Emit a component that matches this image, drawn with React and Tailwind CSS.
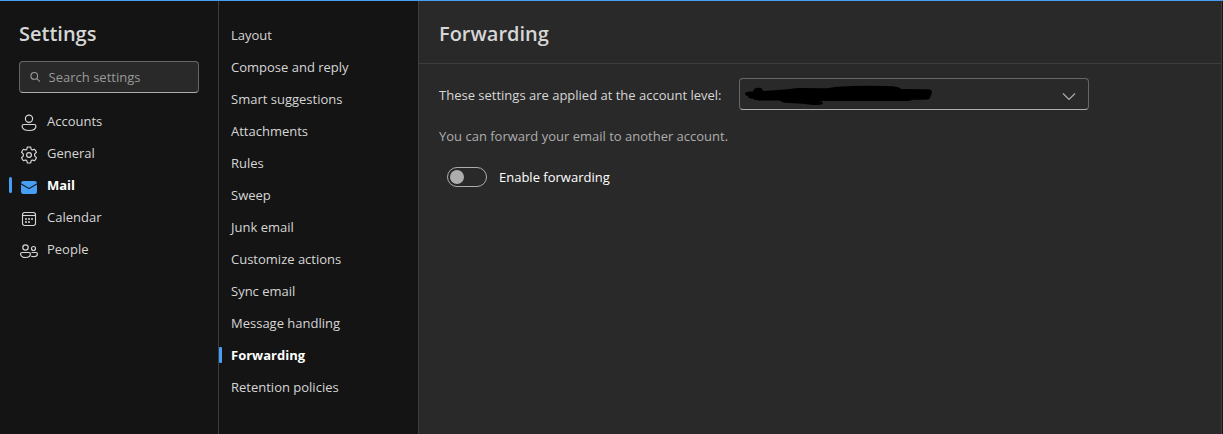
import React, { useState } from 'react';

const AccountIcon = () => (
    <svg width="20" height="20" viewBox="0 0 20 20" fill="none" stroke="currentColor" strokeWidth="1.2" aria-hidden="true">
        <circle cx="10" cy="5.8" r="3.6" />
        <path d="M4.800 11.500h10.400a1.700 1.700 0 0 1 1.700 1.700c0 2.900-3 4.300-6.900 4.300s-6.900-1.400-6.900-4.300a1.700 1.700 0 0 1 1.700-1.700Z" />
    </svg>
);

const GearIcon = () => (
    <svg width="20" height="20" viewBox="0 0 20 20" fill="none" stroke="currentColor" strokeWidth="1.2" strokeLinejoin="round" aria-hidden="true">
        <circle cx="10" cy="10" r="2.4" />
        <path d="M8.300 2.200Q10 1.800 11.700 2.200L12.100 4.100Q12.500 5.100 13.600 4.900L15.600 4.300Q16.900 5.600 17.400 7.400L15.900 8.800Q15.100 10 15.900 11.200L17.400 12.600Q16.900 14.400 15.600 15.700L13.600 15.100Q12.500 14.900 12.100 15.900L11.700 17.800Q10 18.200 8.300 17.800L7.900 15.900Q7.500 14.900 6.400 15.100L4.400 15.700Q3.100 14.400 2.600 12.600L4.100 11.200Q4.900 10 4.100 8.800L2.600 7.400Q3.100 5.600 4.400 4.300L6.400 4.900Q7.500 5.100 7.900 4.100Z" />
    </svg>
);

const MailIcon = () => (
    <svg width="20" height="20" viewBox="0 0 20 20" fill="#479ef5" aria-hidden="true">
        <path d="M18 7.400V14.500A2.500 2.500 0 0 1 15.500 17h-11A2.500 2.500 0 0 1 2 14.500V7.400l7.750 4.530a.5.5 0 0 0 .5 0Z" />
        <path d="M15.500 4A2.500 2.500 0 0 1 18 6.300l-8 4.600L2 6.300A2.500 2.500 0 0 1 4.500 4Z" />
    </svg>
);

const CalendarIcon = () => (
    <svg width="20" height="20" viewBox="0 0 20 20" fill="none" stroke="currentColor" strokeWidth="1.1" aria-hidden="true">
        <rect x="3.5" y="3.5" width="13" height="13" rx="2.2" />
        <path d="M3.500 6.500h13" />
        <g fill="currentColor" stroke="none">
            <circle cx="7" cy="10" r="1" />
            <circle cx="10" cy="10" r="1" />
            <circle cx="13" cy="10" r="1" />
            <circle cx="7" cy="13" r="1" />
            <circle cx="10" cy="13" r="1" />
        </g>
    </svg>
);

const PeopleIcon = () => (
    <svg width="20" height="20" viewBox="0 0 20 20" fill="none" stroke="currentColor" strokeWidth="1.2" aria-hidden="true">
        <circle cx="6.5" cy="6.5" r="2.7" />
        <circle cx="14.5" cy="7.500" r="2" />
        <path d="M3 11.500h7a1.400 1.400 0 0 1 1.400 1.400c0 2-2 3.600-4.900 3.600s-4.900-1.600-4.900-3.600A1.400 1.400 0 0 1 3 11.500Z" />
        <path d="M12.500 11.500H17a1.400 1.400 0 0 1 1.400 1.400c0 1.700-1.700 2.800-3.900 2.800-.9 0-1.700-.1-2.300-.4" />
    </svg>
);

const SearchIcon = () => (
    <svg width="12" height="12" viewBox="0 0 12 12" fill="none" stroke="currentColor" strokeWidth="1.2" aria-hidden="true">
        <circle cx="4.8" cy="4.8" r="3.8" />
        <path d="m7.500 7.500 3.800 3.800" />
    </svg>
);

const sections = [
    { name: 'Accounts', icon: AccountIcon },
    { name: 'General', icon: GearIcon },
    { name: 'Mail', icon: MailIcon },
    { name: 'Calendar', icon: CalendarIcon },
    { name: 'People', icon: PeopleIcon },
];

const mailPages = [
    'Layout',
    'Compose and reply',
    'Smart suggestions',
    'Attachments',
    'Rules',
    'Sweep',
    'Junk email',
    'Customize actions',
    'Sync email',
    'Message handling',
    'Forwarding',
    'Retention policies',
];

function SettingsSidebar() {
    return (
        <aside className="w-[219px] shrink-0 border-r border-[#3d3d3d] pt-[21px]">
            <h1 className="px-[19px] text-xl leading-6 font-semibold text-[#d6d6d6]">Settings</h1>
            <label className="mx-[19px] mt-[15px] flex h-8 items-center gap-2 rounded border border-[#666666] border-b-[#adadad] bg-[#292929] px-2.5 text-[#999999]">
                <SearchIcon />
                <input
                    type="search"
                    aria-label="Search settings"
                    placeholder="Search settings"
                    className="w-full min-w-0 bg-transparent outline-none placeholder:text-[#999999]"
                />
            </label>
            <nav className="mt-3 pl-[9px]" aria-label="Settings">
                {sections.map(({ name, icon: Icon }) => {
                    const active = name === 'Mail';
                    return (
                        <a
                            key={name}
                            href="#"
                            aria-current={active ? 'page' : undefined}
                            className={`flex h-8 items-center ${active ? 'font-bold text-white' : 'text-[#d6d6d6]'}`}
                        >
                            <span className={`h-4 w-[3px] rounded-sm ${active ? 'bg-[#479ef5]' : ''}`} />
                            <span className="mr-2 ml-[7px] pt-1">
                                <Icon />
                            </span>
                            {name}
                        </a>
                    );
                })}
            </nav>
        </aside>
    );
}

function MailNav() {
    return (
        <nav className="w-[200px] shrink-0 border-r border-[#3d3d3d] pt-[18px]" aria-label="Mail">
            {mailPages.map((page) => {
                const active = page === 'Forwarding';
                return (
                    <a
                        key={page}
                        href="#"
                        aria-current={active ? 'page' : undefined}
                        className={`flex h-8 items-center gap-[9px] ${active ? 'font-bold text-white' : 'text-[#d6d6d6]'}`}
                    >
                        <span className={`h-4 w-[3px] rounded-[1px] ${active ? 'bg-[#479ef5]' : ''}`} />
                        {page}
                    </a>
                );
            })}
        </nav>
    );
}

function ForwardingPanel() {
    const [enabled, setEnabled] = useState(false);

    return (
        <main className="min-w-0 flex-1 border-r border-[#3d3d3d] bg-[#292929]">
            <header className="border-b border-[#3d3d3d] px-5 pt-[21px] pb-[17px]">
                <h2 className="text-xl leading-6 font-semibold text-[#d6d6d6]">Forwarding</h2>
            </header>
            <div className="px-5 pt-3.5">
                <div className="flex items-center">
                    <label htmlFor="account" className="w-[300px] pt-0.5 text-[#d6d6d6]">
                        These settings are applied at the account level:
                    </label>
                    <div className="relative w-[350px]">
                        <select
                            id="account"
                            className="block h-8 w-full appearance-none rounded border border-[#666666] border-b-[#adadad] bg-transparent px-3"
                        >
                            <option></option>
                        </select>
                        {/* redacted address and chevron */}
                        <svg className="pointer-events-none absolute inset-0" width="350" height="32" viewBox="0 0 350 32" aria-hidden="true">
                            <path
                                d="M6 15Q7 13 14 13.500L15 11Q19 9 23 10.500L24 13L46 11.500L59 10L88 10.300L98 8.700Q124 7 154 8.300Q160 9 162 11L188 11.300Q193 11 193 14.500L191 20Q190 22 186 21.700H174L170 23H81Q85 24 83.500 26Q80 28 64 25.700L50 25Q43 25 41 22.500L20 22.500Q13 22 14 20.500Q9 21 9 18Q6 18 6 15Z"
                                fill="#000000"
                            />
                            <path d="m324 15.500 6 6 6-6" fill="none" stroke="#adadad" strokeWidth="1.2" />
                        </svg>
                    </div>
                </div>
                <p className="mt-4 text-[#adadad]">You can forward your email to another account.</p>
                <label className="mt-[21px] ml-2 flex w-fit items-center gap-3 text-white">
                    <input
                        type="checkbox"
                        role="switch"
                        checked={enabled}
                        onChange={(e) => setEnabled(e.target.checked)}
                        className="flex h-5 w-10 appearance-none items-center rounded-full border border-[#adadad] px-0.5 before:size-3.5 before:rounded-full before:bg-[#adadad] checked:justify-end checked:bg-[#115ea3]"
                    />
                    Enable forwarding
                </label>
            </div>
        </main>
    );
}

export default function App() {
    return (
        <div className="flex min-h-screen border-t border-[#479ef5] bg-[#141414] pr-px font-['Segoe_UI','Open_Sans',sans-serif] text-[13px] leading-5">
            <SettingsSidebar />
            <MailNav />
            <ForwardingPanel />
        </div>
    );
}
